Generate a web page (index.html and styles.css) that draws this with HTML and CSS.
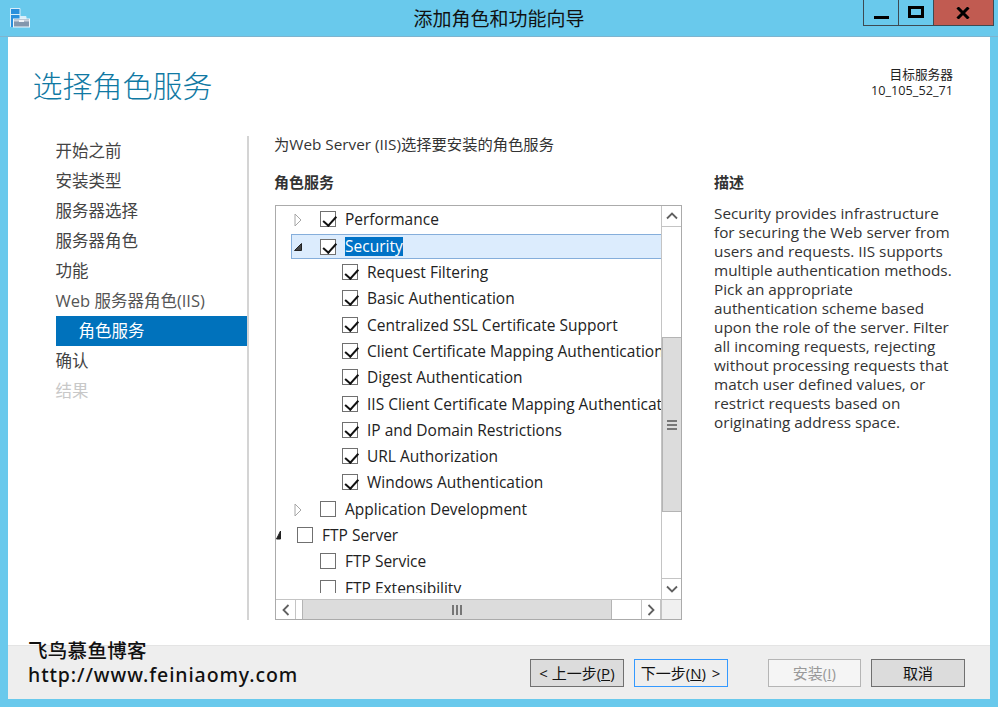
FILE: index.html
```html
<!DOCTYPE html>
<html lang="zh-CN">
<head>
<meta charset="utf-8">
<title>添加角色和功能向导</title>
<link rel="stylesheet" href="styles.css">
</head>
<body>
<div class="window">
  <header class="titlebar">
    <svg class="app-icon" width="21" height="21" viewBox="0 0 21 21">
      <path d="M0.5 0.5h9.5v8h6v3h-6v7h-9.500z" fill="#d8eefa" stroke="#d8eefa"/>
      <rect x="1" y="1" width="8.500" height="5" fill="#2a8fdc"/>
      <rect x="1" y="7" width="8.500" height="12" fill="#2a8fdc"/>
      <rect x="3.500" y="11" width="16" height="8" fill="#8397ad" stroke="#eef6fb"/>
      <rect x="4" y="12" width="15" height="1.500" fill="#c9d2de"/>
      <rect x="9" y="12" width="5" height="2" fill="#eef2f6"/>
    </svg>
    <h1 class="title">添加角色和功能向导</h1>
    <div class="win-controls">
      <div class="win-btn"><span class="glyph-min"></span></div>
      <div class="win-btn"><span class="glyph-max"></span></div>
      <div class="win-btn close">
        <svg width="14" height="12" viewBox="0 0 14 12"><path d="M1.500 0.500L12.500 11.500M12.500 0.500L1.500 11.500" stroke="#000" stroke-width="3" fill="none"/></svg>
      </div>
    </div>
  </header>

  <main class="client">
    <div class="head">
      <h2 class="page-title">选择角色服务</h2>
      <div class="target">目标服务器<br>10_105_52_71</div>
    </div>

    <div class="body">
      <nav class="sidebar">
        <div class="step">开始之前</div>
        <div class="step">安装类型</div>
        <div class="step">服务器选择</div>
        <div class="step">服务器角色</div>
        <div class="step">功能</div>
        <div class="step sub">Web 服务器角色(IIS)</div>
        <div class="step active">角色服务</div>
        <div class="step">确认</div>
        <div class="step disabled">结果</div>
      </nav>

      <section class="main">
        <p class="lead">为Web Server (IIS)选择要安装的角色服务</p>
        <div class="cols">
          <div class="services">
            <h3 class="col-head">角色服务</h3>
            <div class="treebox">
              <div class="tree">
                <div class="row l1"><svg class="exp" width="8" height="14" viewBox="0 0 8 14"><path d="M1 1l6 6-6 6z" fill="#fff" stroke="#a6a6a6"/></svg><span class="cb on"></span><span class="lbl">Performance</span></div>
                <div class="row l1 selected"><svg class="exp" width="8" height="14" viewBox="0 0 8 14"><path d="M7.500 3.500v7h-7z" fill="#444" stroke="#222"/></svg><span class="cb on"></span><span class="lbl hl">Security</span></div>
                <div class="row l2"><span class="cb on"></span><span class="lbl">Request Filtering</span></div>
                <div class="row l2"><span class="cb on"></span><span class="lbl">Basic Authentication</span></div>
                <div class="row l2"><span class="cb on"></span><span class="lbl">Centralized SSL Certificate Support</span></div>
                <div class="row l2"><span class="cb on"></span><span class="lbl">Client Certificate Mapping Authentication</span></div>
                <div class="row l2"><span class="cb on"></span><span class="lbl">Digest Authentication</span></div>
                <div class="row l2"><span class="cb on"></span><span class="lbl">IIS Client Certificate Mapping Authentication</span></div>
                <div class="row l2"><span class="cb on"></span><span class="lbl">IP and Domain Restrictions</span></div>
                <div class="row l2"><span class="cb on"></span><span class="lbl">URL Authorization</span></div>
                <div class="row l2"><span class="cb on"></span><span class="lbl">Windows Authentication</span></div>
                <div class="row l1"><svg class="exp" width="8" height="14" viewBox="0 0 8 14"><path d="M1 1l6 6-6 6z" fill="#fff" stroke="#a6a6a6"/></svg><span class="cb"></span><span class="lbl">Application Development</span></div>
                <div class="row l0"><svg class="exp-clip" width="5" height="10" viewBox="0 0 5 10"><path d="M4.500 1v8H0.500z" fill="#222" stroke="#222"/></svg><span class="cb"></span><span class="lbl">FTP Server</span></div>
                <div class="row l1"><span class="cb"></span><span class="lbl">FTP Service</span></div>
                <div class="row l1"><span class="cb"></span><span class="lbl">FTP Extensibility</span></div>
              </div>
              <div class="vscroll">
                <div class="sb-btn v"><svg width="12" height="8" viewBox="0 0 12 8"><path d="M1 6.500l5-5 5 5" stroke="#606060" stroke-width="1.800" fill="none"/></svg></div>
                <div class="v-track"><div class="v-thumb"><span class="grip-h"></span></div></div>
                <div class="sb-btn v"><svg width="12" height="8" viewBox="0 0 12 8"><path d="M1 1.500l5 5 5-5" stroke="#606060" stroke-width="1.800" fill="none"/></svg></div>
              </div>
              <div class="hscroll">
                <div class="sb-btn h"><svg width="8" height="12" viewBox="0 0 8 12"><path d="M6.500 1l-5 5 5 5" stroke="#606060" stroke-width="1.800" fill="none"/></svg></div>
                <div class="h-thumb"><span class="grip-v"></span></div>
                <div class="h-track"></div>
                <div class="sb-btn h"><svg width="8" height="12" viewBox="0 0 8 12"><path d="M1.500 1l5 5-5 5" stroke="#606060" stroke-width="1.800" fill="none"/></svg></div>
              </div>
              <div class="corner"></div>
            </div>
          </div>
          <aside class="desc">
            <h3 class="col-head">描述</h3>
            <p class="desc-text">Security provides infrastructure for securing the Web server from users and requests. IIS supports multiple authentication methods. Pick an appropriate authentication scheme based upon the role of the server. Filter all incoming requests, rejecting without processing requests that match user defined values, or restrict requests based on originating address space.</p>
          </aside>
        </div>
      </section>
    </div>

    <footer class="footer">
      <div class="watermark"><span class="wm-cn">飞鸟慕鱼博客</span><br><span class="wm-url">http://www.feiniaomy.com</span></div>
      <button class="btn back">&lt; 上一步(<u>P</u>)</button>
      <button class="btn next">下一步(<u>N</u>) &gt;</button>
      <button class="btn install" disabled>安装(<u>I</u>)</button>
      <button class="btn cancel">取消</button>
    </footer>
  </main>
</div>
</body>
</html>
```
FILE: styles.css
```css
* { box-sizing: border-box; }
html, body { margin: 0; height: 100%; overflow: hidden; }
body {
  font-family: "Open Sans", "Noto Sans CJK SC", sans-serif;
  color: #222;
  background: #69c9ec;
}
.window { width: 998px; height: 707px; display: flex; flex-direction: column; padding-bottom: 8px; }

.titlebar { height: 37px; flex: none; display: flex; position: relative; border-bottom: 1px solid #7db4cf; }
.app-icon { position: absolute; left: 10px; top: 8px; }
.title { margin: 0; width: 100%; text-align: center; font: 400 19px/36px "Noto Sans CJK SC", sans-serif; color: #111; }
.win-controls { position: absolute; left: 863px; top: 0; display: flex; height: 26px; border: 1px solid #3d4a52; border-top: 0; }
.win-btn { width: 35px; display: flex; align-items: center; justify-content: center; border-right: 1px solid #3d4a52; }
.win-btn.close { width: 59px; border-right: 0; background: #c15b51; padding-right: 2px; }
.glyph-min { width: 15px; height: 3px; background: #000; margin-top: 9px; }
.glyph-max { width: 16px; height: 12px; border: 3px solid #000; margin-bottom: 2px; margin-right: 1px; }

.client { flex: 1; margin: 0 8px; width: 982px; background: #fff; display: flex; flex-direction: column; min-height: 0; position: relative; }
.head { height: 99px; flex: none; display: flex; justify-content: space-between; padding: 24px 37px 0 24.500px; }
.page-title { margin: 0; font: 300 30px/46px "Noto Sans CJK SC", sans-serif; color: #1079a3; }
.target { text-align: right; font: 400 12.700px/16px "Open Sans", "Noto Sans CJK SC", sans-serif; color: #222; padding-top: 5px; }

.body { flex: none; height: 484px; display: flex; padding-left: 47.500px; }
.sidebar { width: 193.500px; flex: none; border-right: 2px solid #d4d4d4; }
.step { height: 30px; font: 400 16.500px/30px "Open Sans", "Noto Sans CJK SC", sans-serif; color: #444; white-space: nowrap; }
.step.sub { color: #555; }
.step.active { background: #0072bc; color: #fff; padding-left: 23px; }
.step.disabled { color: #c8c8c8; }

.main { flex: 1; padding-left: 26px; min-width: 0; }
.lead { margin: 0 0 0 -1px; height: 33px; font-size: 15.300px; line-height: 16px; color: #333; white-space: nowrap; }
.cols { display: flex; gap: 32px; }
.services { width: 407px; flex: none; }
.col-head { margin: 0 0 0 -1px; height: 36px; font: 700 15px/26px "Noto Sans CJK SC", sans-serif; color: #333; }
.treebox { height: 415px; display: grid; grid-template-columns: 1fr 20px; grid-template-rows: 1fr 20px; border: 1px solid #ababab; }
.tree { overflow: hidden; min-width: 0; min-height: 0; margin-bottom: 6px; padding-top: 0.300px; }
.row { height: 26.300px; display: flex; align-items: center; font-size: 15.500px; white-space: nowrap; position: relative; }
.l0 { padding-left: 21px; }
.l1 { padding-left: 44px; }
.l2 { padding-left: 66px; }
.exp { position: absolute; left: 18px; top: 7px; }
.exp-clip { position: absolute; left: 0; top: 8px; }
.row.selected { padding-top: 2px; }
.row.selected::before { content: ""; position: absolute; left: 15px; right: 0; top: 1px; bottom: 0; background: #dcecfd; border: 1px solid #85aedb; border-right: 0; }
.cb { width: 16px; height: 16px; flex: none; border: 1px solid #707070; background: #fff; position: relative; margin-right: 9px; }
.cb.on::after { content: ""; position: absolute; left: 4.500px; top: 0.500px; width: 5.500px; height: 10.500px; border: solid #111; border-width: 0 2.400px 2.400px 0; transform: rotate(42deg); }
.lbl { position: relative; color: #222; }
.lbl.hl { background: #0072c6; color: #fff; line-height: 19px; }

.vscroll { display: flex; flex-direction: column; border-left: 1px solid #c4c4c4; }
.sb-btn { display: flex; align-items: center; justify-content: center; background: #fff; flex: none; }
.sb-btn.v { height: 21px; }
.sb-btn.v:first-child { border-bottom: 1px solid #c4c4c4; }
.sb-btn.v:last-child { border-top: 1px solid #c4c4c4; }
.sb-btn.h { width: 20px; }
.sb-btn.h:first-child { border-right: 1px solid #c4c4c4; }
.sb-btn.h:last-child { border-left: 1px solid #c4c4c4; border-right: 1px solid #c4c4c4; }
.v-track { flex: 1; padding-top: 110px; background: #fff; min-height: 0; }
.v-thumb { height: 175px; background: #dcdcdc; border: 1px solid #b4b4b4; border-width: 1px 0 1px 1px; display: flex; align-items: center; justify-content: center; }
.grip-h { width: 10px; height: 10px; border-top: 2px solid #777; border-bottom: 2px solid #777; background: linear-gradient(#777, #777) center / 100% 2px no-repeat; }
.hscroll { display: flex; border-top: 1px solid #c4c4c4; }
.h-thumb { width: 310px; margin-left: 6px; background: #dcdcdc; border-left: 1px solid #b4b4b4; border-right: 1px solid #b4b4b4; display: flex; align-items: center; justify-content: center; }
.h-track { flex: 1; background: #fff; }
.grip-v { width: 10px; height: 10px; border-left: 2px solid #777; border-right: 2px solid #777; background: linear-gradient(#777, #777) center / 2px 100% no-repeat; }
.corner { background: #f0f0f0; border-top: 1px solid #c4c4c4; border-left: 1px solid #c4c4c4; }

.desc { flex: 1; min-width: 0; }
.desc .col-head { margin-left: 0; }
.desc-text { margin: -1px 0 0; width: 240px; font-size: 15.300px; line-height: 19px; color: #333; }

.footer { margin-top: auto; height: 54px; background: #eee; border-top: 1px solid #e4e4e4; display: flex; align-items: center; padding: 0 25px 0 522px; position: relative; }
.watermark { position: absolute; left: 20px; top: -7px; font: 500 19.500px/23.500px "Noto Sans", "Noto Sans CJK SC", sans-serif; color: #111; white-space: nowrap; }
.wm-cn { letter-spacing: 0.300px; }
.wm-url { letter-spacing: 0.900px; }
.btn { width: 94px; height: 28px; padding: 0; font: 400 15px/24px "Open Sans", "Noto Sans CJK SC", sans-serif; color: #111; background: #dcdcdc; border: 1px solid #707070; margin-right: 10px; }
.btn.next { background: #eee; border-color: #3399ff; margin-right: 40px; word-spacing: 2px; }
.btn.install { background: #f5f5f5; border-color: #b5b5b5; color: #999; }
.btn.cancel { margin-right: 0; }
```
